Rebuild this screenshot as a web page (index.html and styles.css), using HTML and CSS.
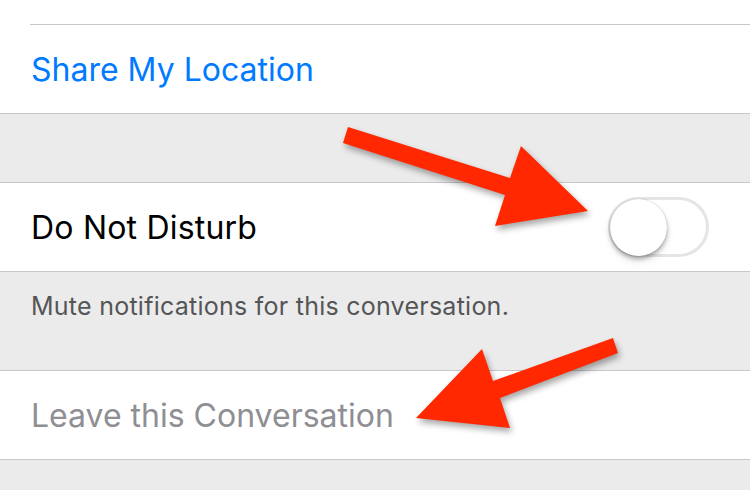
FILE: index.html
```html
<!DOCTYPE html>
<html lang="en">
<head>
    <meta charset="UTF-8">
    <meta name="viewport" content="width=device-width, initial-scale=1.0">
    <title>Conversation Details</title>
    <link rel="stylesheet" href="styles.css">
</head>
<body>
    <div class="screen">
        <div class="cell-stub"></div>
        <div class="separator inset"></div>
        <div class="cell">
            <span class="cell-link">Share My Location</span>
        </div>
        <div class="separator"></div>
        <div class="group-gap"></div>
        <div class="separator"></div>
        <div class="cell">
            <span class="cell-label">Do Not Disturb</span>
            <span class="switch">
                <span class="switch-knob"></span>
            </span>
        </div>
        <div class="separator"></div>
        <div class="group-footer">Mute notifications for this conversation.</div>
        <div class="separator"></div>
        <div class="cell">
            <span class="cell-disabled">Leave this Conversation</span>
        </div>
        <div class="separator"></div>
        <div class="group-gap"></div>

        <!-- annotation arrows drawn over the screenshot -->
        <svg class="arrows" width="750" height="490" viewBox="0 0 750 490">
            <polygon class="arrow" points="348,127 510,178 521,146 588,211 495,226 505,195 343,143"/>
            <polygon class="arrow" points="613,338 618,353 500,398 510,428 416,418 482,349 493,381"/>
        </svg>
    </div>
</body>
</html>
```

FILE: styles.css
```css
body {
    margin: 0;
    font-family: Inter, "Noto Sans", sans-serif;
    background-color: #ebebeb;
}

.screen {
    position: relative;
    width: 750px;
    height: 490px;
    overflow: hidden;
    background-color: #ebebeb;
}

.cell-stub {
    height: 24px;
    background-color: #fff;
}

.separator {
    height: 1px;
    background-color: #c8c7cc;
}

.separator.inset {
    border-left: 30px solid #fff;
}

.cell {
    display: flex;
    align-items: center;
    justify-content: space-between;
    height: 88px;
    padding: 0 41px 0 31px;
    background-color: #fff;
}

.cell-link {
    font-size: 32px;
    color: #007aff;
}

.cell-label {
    font-size: 32px;
    letter-spacing: 0.2px;
    color: #000;
}

.cell-disabled {
    font-size: 32px;
    color: #8e8e93;
}

.group-gap {
    height: 68px;
}

.group-footer {
    height: 98px;
    box-sizing: border-box;
    padding: 19px 31px 0;
    font-size: 25px;
    letter-spacing: 0.25px;
    color: #555557;
}

.switch {
    position: relative;
    width: 101px;
    height: 60px;
    box-sizing: border-box;
    border: 3px solid #e5e5e5;
    border-radius: 30px;
    background-color: #fff;
}

.switch-knob {
    position: absolute;
    left: -1px;
    top: -1px;
    width: 57px;
    height: 57px;
    border-radius: 50%;
    background-color: #fff;
    box-shadow: 0 3px 4px rgba(0, 0, 0, 0.3), 0 0 1px rgba(0, 0, 0, 0.25), 0 6px 10px rgba(0, 0, 0, 0.08);
}

.arrows {
    position: absolute;
    left: 0;
    top: 0;
}

.arrow {
    fill: #ff2800;
    filter: drop-shadow(2px 4px 3px rgba(0, 0, 0, 0.35));
}
```
